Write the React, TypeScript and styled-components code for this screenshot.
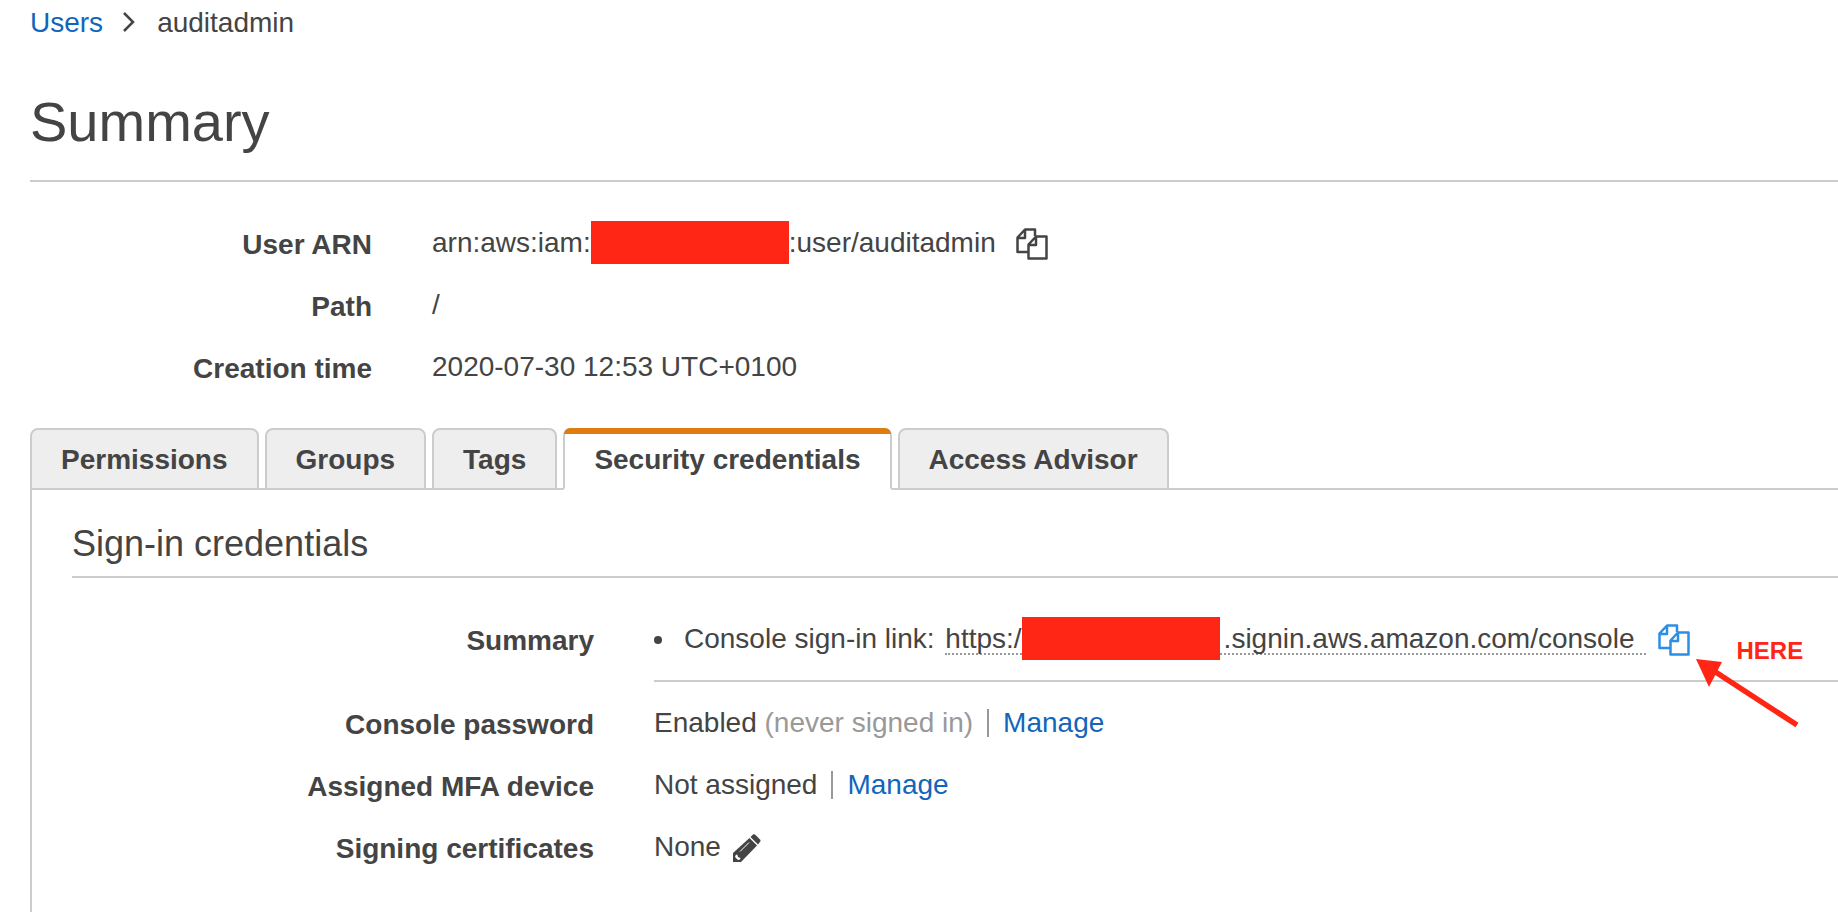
import React from 'react';
import styled, { createGlobalStyle } from 'styled-components';

const colors = {
  text: '#444444',
  link: '#1166bb',
  muted: '#999999',
  line: '#cccccc',
  tab: '#eeeeee',
  accent: '#e07b10',
  mark: '#ff2616',
  active: '#2e8de5',
};

const GlobalStyle = createGlobalStyle`
  * { box-sizing: border-box; }
  body {
    margin: 0;
    background: #ffffff;
    color: ${colors.text};
    font: 28px/32px "Helvetica Neue", "Liberation Sans", Arial, sans-serif;
    overflow-x: hidden;
  }
`;

const Page = styled.main`
  display: flex;
  flex-direction: column;
  min-height: 100vh;
  padding-left: 30px;
`;

const Breadcrumb = styled.nav`
  display: flex;
  align-items: center;
  padding-top: 7px;
`;

const TextLink = styled.a`
  color: ${colors.link};
  text-decoration: none;
`;

const Chevron = styled.svg`
  width: 12px;
  height: 20px;
  margin: 0 22px 2px 20px;
`;

const PageTitle = styled.h1`
  margin: 0;
  padding: 51px 0 26px;
  border-bottom: 2px solid ${colors.line};
  font-size: 56px;
  font-weight: 400;
  line-height: 64px;
`;

const Details = styled.dl<{ $labelWidth: number }>`
  display: grid;
  grid-template-columns: ${(p) => p.$labelWidth}px 1fr;
  column-gap: 60px;
  margin: 0;
  padding-top: 30px;
`;

const Label = styled.dt`
  height: 62px;
  padding-top: 17px;
  font-weight: 700;
  text-align: right;
`;

const Value = styled.dd<{ $divided?: boolean }>`
  display: flex;
  align-items: center;
  height: ${(p) => (p.$divided ? 74 : 62)}px;
  margin: 0 0 ${(p) => (p.$divided ? 10 : 0)}px;
  padding-bottom: ${(p) => (p.$divided ? 10 : 0)}px;
  border-bottom: ${(p) => (p.$divided ? `2px solid ${colors.line}` : 'none')};
  white-space: pre;
`;

const Redaction = styled.span<{ $gap?: number }>`
  width: 198px;
  height: 43px;
  margin: -6px ${(p) => p.$gap ?? 0}px -5px 0;
  background: ${colors.mark};
`;

const IconButton = styled.button<{ $color?: string; $gap: number }>`
  position: relative;
  display: flex;
  margin: 2px 0 0 ${(p) => p.$gap}px;
  padding: 0;
  border: 0;
  background: none;
  color: ${(p) => p.$color ?? colors.text};
`;

const Tabs = styled.div`
  display: flex;
  gap: 6px;
  margin-top: 30px;
`;

const Tab = styled.button<{ $selected?: boolean }>`
  position: relative;
  height: 62px;
  padding: 2px 29px 0;
  border: 2px solid ${colors.line};
  border-bottom-color: ${(p) => (p.$selected ? '#ffffff' : colors.line)};
  border-radius: 8px 8px 0 0;
  background: ${(p) => (p.$selected ? '#ffffff' : colors.tab)};
  color: ${colors.text};
  font: inherit;
  font-weight: 700;
  white-space: nowrap;
  z-index: 1;

  &::before {
    content: '';
    display: ${(p) => (p.$selected ? 'block' : 'none')};
    position: absolute;
    inset: -2px -1px auto;
    height: 6px;
    border-radius: 6px 6px 0 0;
    background: ${colors.accent};
  }
`;

const Panel = styled.section`
  flex: 1;
  margin-top: -2px;
  padding: 33px 0 34px 40px;
  border: solid ${colors.line};
  border-width: 2px 0 0 2px;
`;

const SectionTitle = styled.h2`
  margin: 0;
  padding-bottom: 11px;
  border-bottom: 2px solid ${colors.line};
  font-size: 36px;
  font-weight: 400;
  line-height: 42px;
`;

const Bullet = styled.span`
  width: 8px;
  height: 8px;
  margin: 2px 22px 0 0;
  border-radius: 50%;
  background: ${colors.text};
`;

const SigninLink = styled.a`
  display: flex;
  height: 32px;
  margin-left: 3px;
  padding-right: 12px;
  border-bottom: 2px dotted ${colors.muted};
  color: inherit;
  text-decoration: none;
`;

const Muted = styled.span`
  color: ${colors.muted};
`;

const Separator = styled.span`
  width: 2px;
  height: 28px;
  margin: 0 14px;
  background: ${colors.muted};
`;

const Annotation = styled.span`
  position: absolute;
  top: 15px;
  left: 78px;
  color: ${colors.mark};
  font-size: 24px;
  font-weight: 700;
  line-height: 24px;
`;

const Arrow = styled.svg`
  position: absolute;
  top: 35px;
  left: 38px;
  width: 104px;
  height: 72px;
`;

const CopyIcon = () => (
  <svg width="32" height="32" viewBox="0 0 32 32" fill="none" stroke="currentColor" strokeWidth="2.5" strokeLinejoin="round" aria-hidden="true">
    <path d="M12 24H1.5V9.5L9 1.5H19V8M1.5 10H9V1.5" />
    <path d="M20 8.500H30.500V30.500H12.500V16.500ZM12.500 17H20V8.500" />
  </svg>
);

const PencilIcon = () => (
  <svg width="28" height="28" viewBox="0 0 28 28" fill="currentColor" aria-hidden="true">
    <path d="M0 28V19L16.500 4L24 11.500L8 28Z" />
    <path d="M17.500 3L20 0.600Q21 0 22 0.600L27 5.500Q28 6.500 27.300 7.500L25 10.500Z" />
    <path d="M3 20.500L4.500 21L5 23L7.500 24L7 25.500L5 26L2 23Z" fill="#fff" />
    <path d="M7 17.500L16 8.500" stroke="#fff" />
  </svg>
);

export default function App() {
  return (
    <Page>
      <GlobalStyle />
      <Breadcrumb aria-label="Breadcrumb">
        <TextLink href="#users">Users</TextLink>
        <Chevron viewBox="0 0 12 20" fill="none" stroke={colors.text} strokeWidth="2.5" aria-hidden="true">
          <path d="M1 1L10 10L1 19" />
        </Chevron>
        <span>auditadmin</span>
      </Breadcrumb>
      <PageTitle>Summary</PageTitle>

      <Details $labelWidth={342}>
        <Label>User ARN</Label>
        <Value>
          arn:aws:iam:
          <Redaction />
          :user/auditadmin
          <IconButton type="button" aria-label="Copy user ARN" $gap={20}><CopyIcon /></IconButton>
        </Value>
        <Label>Path</Label>
        <Value>/</Value>
        <Label>Creation time</Label>
        <Value>2020-07-30 12:53 UTC+0100</Value>
      </Details>

      <Tabs role="tablist">
        <Tab type="button" role="tab">Permissions</Tab>
        <Tab type="button" role="tab">Groups</Tab>
        <Tab type="button" role="tab">Tags</Tab>
        <Tab type="button" role="tab" aria-selected="true" $selected>Security credentials</Tab>
        <Tab type="button" role="tab">Access Advisor</Tab>
      </Tabs>

      <Panel role="tabpanel">
        <SectionTitle>Sign-in credentials</SectionTitle>
        <Details $labelWidth={522}>
          <Label>Summary</Label>
          <Value $divided>
            <Bullet />
            {'Console sign-in link: '}
            <SigninLink href="#console">
              https:/
              <Redaction $gap={4} />
              .signin.aws.amazon.com/console
            </SigninLink>
            <IconButton type="button" aria-label="Copy sign-in link" $color={colors.active} $gap={12}>
              <CopyIcon />
              <Annotation>HERE</Annotation>
              <Arrow viewBox="0 0 104 72" fill={colors.mark} aria-hidden="true">
                <path d="M0 0L26 3L13 28Z" />
                <path d="M18 12L101 66" stroke={colors.mark} strokeWidth="5.5" />
              </Arrow>
            </IconButton>
          </Value>
          <Label>Console password</Label>
          <Value>
            {'Enabled '}
            <Muted>(never signed in)</Muted>
            <Separator />
            <TextLink href="#password">Manage</TextLink>
          </Value>
          <Label>Assigned MFA device</Label>
          <Value>
            Not assigned
            <Separator />
            <TextLink href="#mfa">Manage</TextLink>
          </Value>
          <Label>Signing certificates</Label>
          <Value>
            None
            <IconButton type="button" aria-label="Edit signing certificates" $gap={12}><PencilIcon /></IconButton>
          </Value>
        </Details>
      </Panel>
    </Page>
  );
}
